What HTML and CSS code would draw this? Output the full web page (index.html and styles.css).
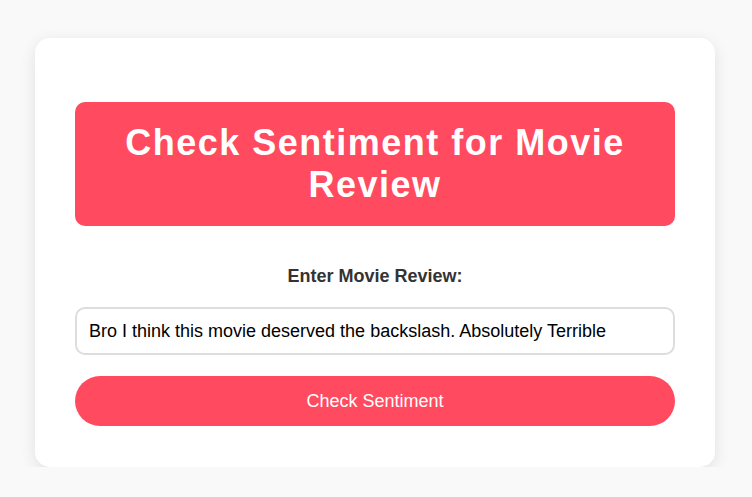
FILE: index.html
```html
<!DOCTYPE html>
<html lang="en">
<head>
<meta charset="utf-8">
<title>Movie Review Sentiment</title>
<link rel="stylesheet" href="styles.css">
</head>
<body>
<div class="card">
  <h1 class="title">Check Sentiment for Movie Review</h1>
  <form class="form">
    <label class="label" for="review">Enter Movie Review:</label>
    <input class="input" id="review" type="text" value="Bro I think this movie deserved the backslash. Absolutely Terrible">
    <button class="btn" type="button">Check Sentiment</button>
  </form>
</div>
</body>
</html>
```
FILE: styles.css
```css
html, body {
  margin: 0;
  padding: 0;
}
body {
  background: #f9f9f9;
  font-family: "Liberation Sans", Arial, sans-serif;
  padding: 38px 2px 0 0;
}
.card {
  box-sizing: border-box;
  width: 680px;
  margin: 0 auto;
  background: #fff;
  border-radius: 15px;
  padding: 40px 40px 41px;
  box-shadow: 0 4px 16px rgba(0, 0, 0, 0.1);
}
.title {
  margin: 24px 0 0;
  background: #ff4a5f;
  color: #fff;
  border-radius: 10px;
  padding: 20px;
  font-size: 36px;
  line-height: 42px;
  letter-spacing: 1.5px;
  text-align: center;
  font-weight: bold;
}
.form {
  display: flex;
  flex-direction: column;
  margin-top: 40px;
}
.label {
  display: block;
  text-align: center;
  color: #333;
  font-size: 18px;
  font-weight: bold;
  line-height: 21px;
  margin-bottom: 20px;
}
.input {
  box-sizing: border-box;
  width: 100%;
  height: 48px;
  border: 2px solid #ddd;
  border-radius: 10px;
  padding: 0 12px;
  font-family: "Liberation Sans", Arial, sans-serif;
  font-size: 18px;
  color: #000;
  background: #fff;
  outline: none;
}
.btn {
  margin-top: 21px;
  height: 50px;
  border: none;
  border-radius: 25px;
  background: #ff4a5f;
  color: #fff;
  font-family: "Liberation Sans", Arial, sans-serif;
  font-size: 18px;
  cursor: pointer;
}
```
